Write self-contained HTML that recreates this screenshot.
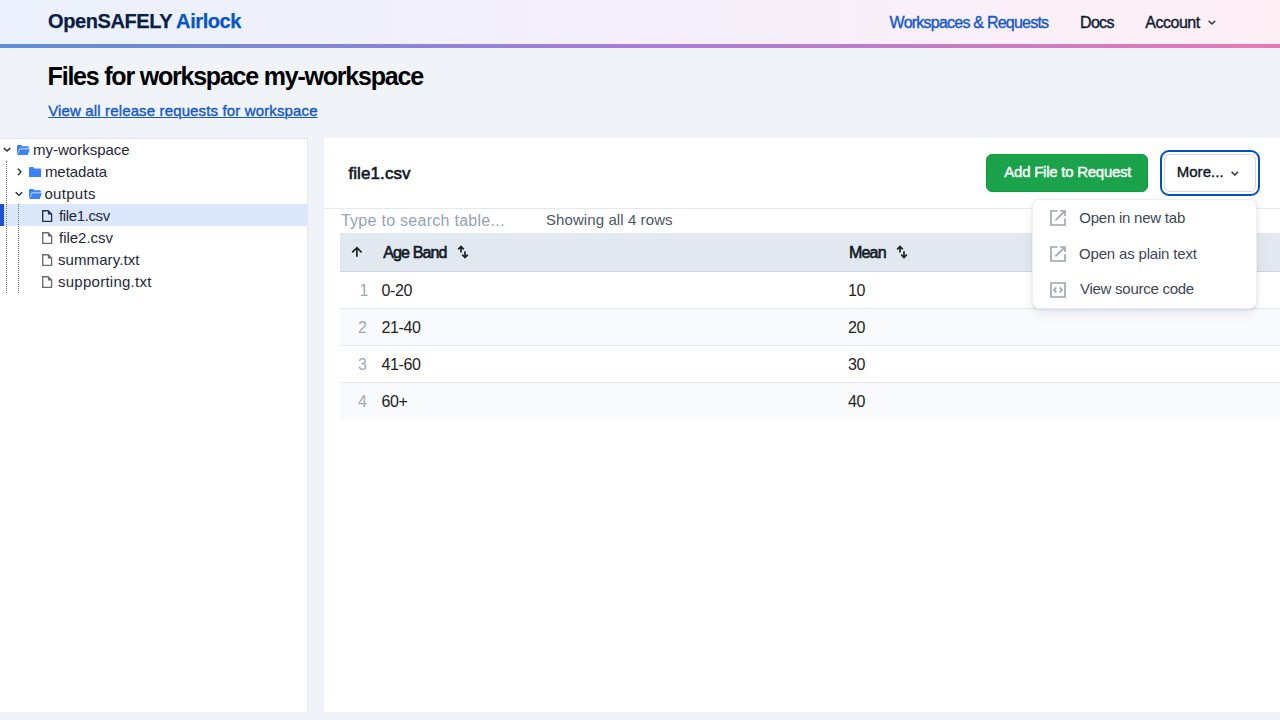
<!DOCTYPE html>
<html><head><meta charset="utf-8"><title>Airlock</title><style>
*{box-sizing:border-box;margin:0;padding:0}
html,body{width:1280px;height:720px;overflow:hidden}
body{font-family:"Liberation Sans",sans-serif;background:#f0f4f9;color:#111827;position:relative}
.tx{position:absolute;white-space:pre;line-height:1}
.ic{position:absolute;overflow:visible}
.bx{position:absolute}
</style></head><body>
<div class="bx" style="left:0;top:0;width:1280px;height:44px;background:linear-gradient(90deg,#ebf1fc 0%,#f4effb 50%,#fff0f6 100%)"></div>
<div class="bx" style="left:0;top:44px;width:1280px;height:4px;background:linear-gradient(90deg,#5c8fd6 0%,#a87cd8 50%,#e87ab4 100%)"></div>
<div class="tx" style="left:48.0px;top:11.0px;font-size:20px;font-weight:700;-webkit-text-stroke:0.25px currentColor;letter-spacing:-0.412px;color:#0b1f45">OpenSAFELY <span style="color:#0756c4">Airlock</span></div>
<div class="tx" style="left:889.6px;top:15.0px;font-size:16px;font-weight:400;-webkit-text-stroke:0.4px currentColor;letter-spacing:-0.77px;color:#1559c9;">Workspaces &amp; Requests</div>
<div class="tx" style="left:1080.0px;top:15.0px;font-size:16px;font-weight:400;-webkit-text-stroke:0.4px currentColor;letter-spacing:-0.667px;color:#0f1b36;">Docs</div>
<div class="tx" style="left:1145.2px;top:15.0px;font-size:16px;font-weight:400;-webkit-text-stroke:0.4px currentColor;letter-spacing:-0.467px;color:#0f1b36;">Account</div>
<svg class="ic" style="left:1208px;top:20px" width="8" height="5" viewBox="0 0 8 5"><path d="M0.7 0.9 L3.9 4 L7.1 0.9" fill="none" stroke="#333a46" stroke-width="1.5"/></svg>
<div class="tx" style="left:47.6px;top:64.0px;font-size:25px;font-weight:700;letter-spacing:-1.213px;color:#000000;">Files for workspace my-workspace</div>
<div class="tx" style="left:48.25px;top:102.0px;font-size:15px;font-weight:400;-webkit-text-stroke:0.4px currentColor;letter-spacing:0.138px;color:#1559c9;text-decoration:underline;text-underline-offset:1px;text-decoration-thickness:1px;margin-top:1px">View all release requests for workspace</div>
<div class="bx" style="left:0;top:138px;width:308px;height:574px;background:#fff;border-top:1px solid #e3e6eb;border-right:1px solid #e3e6eb"></div>
<div class="bx" style="left:0;top:204px;width:307px;height:22px;background:#dbe8fc"></div>
<div class="bx" style="left:0;top:204px;width:4px;height:22px;background:#1c4fd6"></div>
<div class="bx" style="left:6px;top:161px;width:1px;height:132px;border-left:1px dotted #6b7280"></div>
<div class="bx" style="left:18px;top:204px;width:1px;height:89px;border-left:1px dotted #6b7280"></div>
<svg class="ic" style="left:3px;top:147px" width="8" height="5" viewBox="0 0 8 5"><path d="M0.8 0.9 L4.05 4 L7.3 0.9" fill="none" stroke="#222831" stroke-width="1.4"/></svg>
<svg class="ic" style="left:17px;top:145px" width="13" height="10" viewBox="0 0 13 10"><path d="M0 1 Q0 0 1 0 H4.3 L5.3 1.2 H10.8 Q11.8 1.2 11.8 2.2 V3.4 H2.8 L0 9.6 Z M3.2 4.3 H13 L10.6 10 H0.2 Z" fill="#3b82f6"/></svg>
<svg class="ic" style="left:16.5px;top:168px" width="5" height="8" viewBox="0 0 5 8"><path d="M0.9 0.6 L3.9 3.85 L0.9 7.1" fill="none" stroke="#222831" stroke-width="1.4"/></svg>
<svg class="ic" style="left:29px;top:167px" width="12" height="10" viewBox="0 0 12 10"><path d="M0 0.8 Q0 0 0.8 0 H4.4 L5.4 1.4 H11.2 Q12 1.4 12 2.2 V10 H0 Z" fill="#3b82f6"/></svg>
<svg class="ic" style="left:15px;top:191px" width="8" height="5" viewBox="0 0 8 5"><path d="M0.7 1.3 L4 4.4 L7.2 1.3" fill="none" stroke="#222831" stroke-width="1.4"/></svg>
<svg class="ic" style="left:29px;top:189px" width="13" height="10" viewBox="0 0 13 10"><path d="M0 1 Q0 0 1 0 H4.3 L5.3 1.2 H10.8 Q11.8 1.2 11.8 2.2 V3.4 H2.8 L0 9.6 Z M3.2 4.3 H13 L10.6 10 H0.2 Z" fill="#3b82f6"/></svg>
<svg class="ic" style="left:41.8px;top:210px" width="11" height="12" viewBox="0 0 11 12"><path d="M0.7 0.7 H6.2 L9.6 4.1 V11.3 H0.7 Z" fill="none" stroke="#1e2f6b" stroke-width="1.35" stroke-linejoin="miter"/><path d="M5.9 0.6 L9.8 4.5 H5.9 Z" fill="#1e2f6b"/></svg>
<svg class="ic" style="left:41.8px;top:232px" width="11" height="12" viewBox="0 0 11 12"><path d="M0.7 0.7 H6.2 L9.6 4.1 V11.3 H0.7 Z" fill="none" stroke="#6b6b6b" stroke-width="1.35" stroke-linejoin="miter"/><path d="M5.9 0.6 L9.8 4.5 H5.9 Z" fill="#6b6b6b"/></svg>
<svg class="ic" style="left:41.8px;top:254px" width="11" height="12" viewBox="0 0 11 12"><path d="M0.7 0.7 H6.2 L9.6 4.1 V11.3 H0.7 Z" fill="none" stroke="#6b6b6b" stroke-width="1.35" stroke-linejoin="miter"/><path d="M5.9 0.6 L9.8 4.5 H5.9 Z" fill="#6b6b6b"/></svg>
<svg class="ic" style="left:41.8px;top:276px" width="11" height="12" viewBox="0 0 11 12"><path d="M0.7 0.7 H6.2 L9.6 4.1 V11.3 H0.7 Z" fill="none" stroke="#6b6b6b" stroke-width="1.35" stroke-linejoin="miter"/><path d="M5.9 0.6 L9.8 4.5 H5.9 Z" fill="#6b6b6b"/></svg>
<div class="tx" style="left:33.0px;top:142.0px;font-size:15px;font-weight:400;letter-spacing:0.0px;color:#1f2937;">my-workspace</div>
<div class="tx" style="left:44.9px;top:164.0px;font-size:15px;font-weight:400;letter-spacing:-0.043px;color:#1f2937;">metadata</div>
<div class="tx" style="left:44.4px;top:186.0px;font-size:15px;font-weight:400;letter-spacing:0.3px;color:#1f2937;">outputs</div>
<div class="tx" style="left:59.0px;top:208.0px;font-size:15px;font-weight:400;letter-spacing:-0.375px;color:#1e293b;">file1.csv</div>
<div class="tx" style="left:59.0px;top:230.0px;font-size:15px;font-weight:400;letter-spacing:-0.025px;color:#1f2937;">file2.csv</div>
<div class="tx" style="left:58.0px;top:252.0px;font-size:15px;font-weight:400;letter-spacing:0.09px;color:#1f2937;">summary.txt</div>
<div class="tx" style="left:58.0px;top:274.0px;font-size:15px;font-weight:400;letter-spacing:0.254px;color:#1f2937;">supporting.txt</div>
<div class="bx" style="left:324px;top:138px;width:956px;height:574px;background:#fff"></div>
<div class="tx" style="left:348.4px;top:165.0px;font-size:17px;font-weight:400;-webkit-text-stroke:0.6px currentColor;letter-spacing:0.1px;color:#111827;">file1.csv</div>
<div class="bx" style="left:986px;top:154px;width:162px;height:38px;background:#1aa34a;border:1px solid #0f9a3e;border-radius:6px;box-shadow:0 1px 2px rgba(0,0,0,0.06)"></div>
<div class="tx" style="left:1004.3px;top:164.0px;font-size:15px;font-weight:400;-webkit-text-stroke:0.4px currentColor;letter-spacing:-0.25px;color:#ffffff;">Add File to Request</div>
<div class="bx" style="left:1160px;top:150px;width:100px;height:46px;border:2px solid #0052c2;border-radius:9px"></div>
<div class="bx" style="left:1164px;top:154px;width:92px;height:38px;background:#fff;border:1px solid #d4d7dd;border-radius:6px"></div>
<div class="tx" style="left:1176.7px;top:164.0px;font-size:15px;font-weight:400;-webkit-text-stroke:0.4px currentColor;letter-spacing:0.05px;color:#111827;">More...</div>
<svg class="ic" style="left:1231px;top:171px" width="8" height="5" viewBox="0 0 8 5"><path d="M0.6 0.9 L3.8 4 L7 0.9" fill="none" stroke="#333a46" stroke-width="1.5"/></svg>
<div class="bx" style="left:324px;top:208px;width:956px;height:1px;background:#e2e8f0"></div>
<div class="tx" style="left:340.9px;top:213.0px;font-size:16px;font-weight:400;letter-spacing:0.277px;color:#94a3b8;">Type to search table...</div>
<div class="tx" style="left:546.0px;top:212.0px;font-size:15px;font-weight:400;letter-spacing:0.088px;color:#4b5563;">Showing all 4 rows</div>
<div class="bx" style="left:340px;top:233px;width:940px;height:38px;background:#e2e8f0"></div>
<div class="bx" style="left:340px;top:271px;width:940px;height:1px;background:#cbd5e1"></div>
<svg class="ic" style="left:351px;top:246px" width="12" height="12" viewBox="0 0 12 12"><path d="M5.9 10.7 V1.5 M1.2 6.4 L5.9 1.6 L10.6 6.4" fill="none" stroke="#222222" stroke-width="1.7"/></svg>
<div class="tx" style="left:383.2px;top:245.0px;font-size:16px;font-weight:400;-webkit-text-stroke:0.6px currentColor;letter-spacing:-0.857px;color:#111827;">Age Band</div>
<svg class="ic" style="left:457px;top:245px" width="12" height="14" viewBox="0 0 12 14"><path d="M4 7.4 V1.5 M1.2 4.3 L4 1.5 L6.8 4.3 M8 6.3 V12.5 M5.2 9.7 L8 12.5 L10.8 9.7" fill="none" stroke="#222222" stroke-width="1.7"/></svg>
<div class="tx" style="left:849.0px;top:245.0px;font-size:16px;font-weight:400;-webkit-text-stroke:0.6px currentColor;letter-spacing:-0.833px;color:#111827;">Mean</div>
<svg class="ic" style="left:896px;top:245px" width="12" height="14" viewBox="0 0 12 14"><path d="M4 7.4 V1.5 M1.2 4.3 L4 1.5 L6.8 4.3 M8 6.3 V12.5 M5.2 9.7 L8 12.5 L10.8 9.7" fill="none" stroke="#222222" stroke-width="1.7"/></svg>
<div class="bx" style="left:340px;top:272px;width:940px;height:36px;background:#ffffff"></div>
<div class="bx" style="left:340px;top:308px;width:940px;height:1px;background:#e2e8f0"></div>
<div class="tx" style="left:359.6px;top:283.0px;font-size:16px;font-weight:400;letter-spacing:0px;color:#a3a9b3;">1</div>
<div class="tx" style="left:381.5px;top:283.0px;font-size:16px;font-weight:400;letter-spacing:-0.4px;color:#222222;">0-20</div>
<div class="tx" style="left:848.0px;top:283.0px;font-size:16px;font-weight:400;letter-spacing:-0.4px;color:#222222;">10</div>
<div class="bx" style="left:340px;top:309px;width:940px;height:36px;background:#f8fafc"></div>
<div class="bx" style="left:340px;top:345px;width:940px;height:1px;background:#e2e8f0"></div>
<div class="tx" style="left:358.1px;top:320.0px;font-size:16px;font-weight:400;letter-spacing:0px;color:#a3a9b3;">2</div>
<div class="tx" style="left:381.5px;top:320.0px;font-size:16px;font-weight:400;letter-spacing:-0.4px;color:#222222;">21-40</div>
<div class="tx" style="left:848.0px;top:320.0px;font-size:16px;font-weight:400;letter-spacing:-0.4px;color:#222222;">20</div>
<div class="bx" style="left:340px;top:346px;width:940px;height:36px;background:#ffffff"></div>
<div class="bx" style="left:340px;top:382px;width:940px;height:1px;background:#e2e8f0"></div>
<div class="tx" style="left:358.1px;top:357.0px;font-size:16px;font-weight:400;letter-spacing:0px;color:#a3a9b3;">3</div>
<div class="tx" style="left:381.5px;top:357.0px;font-size:16px;font-weight:400;letter-spacing:-0.4px;color:#222222;">41-60</div>
<div class="tx" style="left:848.0px;top:357.0px;font-size:16px;font-weight:400;letter-spacing:-0.4px;color:#222222;">30</div>
<div class="bx" style="left:340px;top:383px;width:940px;height:36px;background:#f8fafc"></div>
<div class="tx" style="left:358.1px;top:394.0px;font-size:16px;font-weight:400;letter-spacing:0px;color:#a3a9b3;">4</div>
<div class="tx" style="left:381.5px;top:394.0px;font-size:16px;font-weight:400;letter-spacing:-0.4px;color:#222222;">60+</div>
<div class="tx" style="left:848.0px;top:394.0px;font-size:16px;font-weight:400;letter-spacing:-0.4px;color:#222222;">40</div>
<div class="bx" style="left:1031.5px;top:199px;width:225px;height:110px;background:#fff;border:1px solid #eceef1;border-radius:7px;box-shadow:0 1px 2px rgba(0,0,0,0.1),0 4px 12px rgba(15,23,42,0.08)"></div>
<svg class="ic" style="left:1050px;top:210px" width="16" height="16" viewBox="0 0 16 16"><path d="M7.6 1 H1 V15 H15 V8.2 M5.4 10.4 L14.6 1.4 M10 1 H15 V6" fill="none" stroke="#9ca3af" stroke-width="1.6"/></svg>
<div class="tx" style="left:1079.3px;top:209.5px;font-size:15px;font-weight:400;letter-spacing:-0.236px;color:#3d4756;">Open in new tab</div>
<svg class="ic" style="left:1050px;top:246px" width="16" height="16" viewBox="0 0 16 16"><path d="M7.6 1 H1 V15 H15 V8.2 M5.4 10.4 L14.6 1.4 M10 1 H15 V6" fill="none" stroke="#9ca3af" stroke-width="1.6"/></svg>
<div class="tx" style="left:1079.0px;top:245.5px;font-size:15px;font-weight:400;letter-spacing:-0.176px;color:#3d4756;">Open as plain text</div>
<svg class="ic" style="left:1050px;top:282px" width="16" height="16" viewBox="0 0 16 16"><path d="M1 1 H15 V15 H1 Z M6.4 5.4 L3.9 7.9 L6.4 10.4 M9.6 5.4 L12.1 7.9 L9.6 10.4" fill="none" stroke="#9ca3af" stroke-width="1.6"/></svg>
<div class="tx" style="left:1080.0px;top:281.4px;font-size:15px;font-weight:400;letter-spacing:-0.267px;color:#3d4756;">View source code</div>
</body></html>
